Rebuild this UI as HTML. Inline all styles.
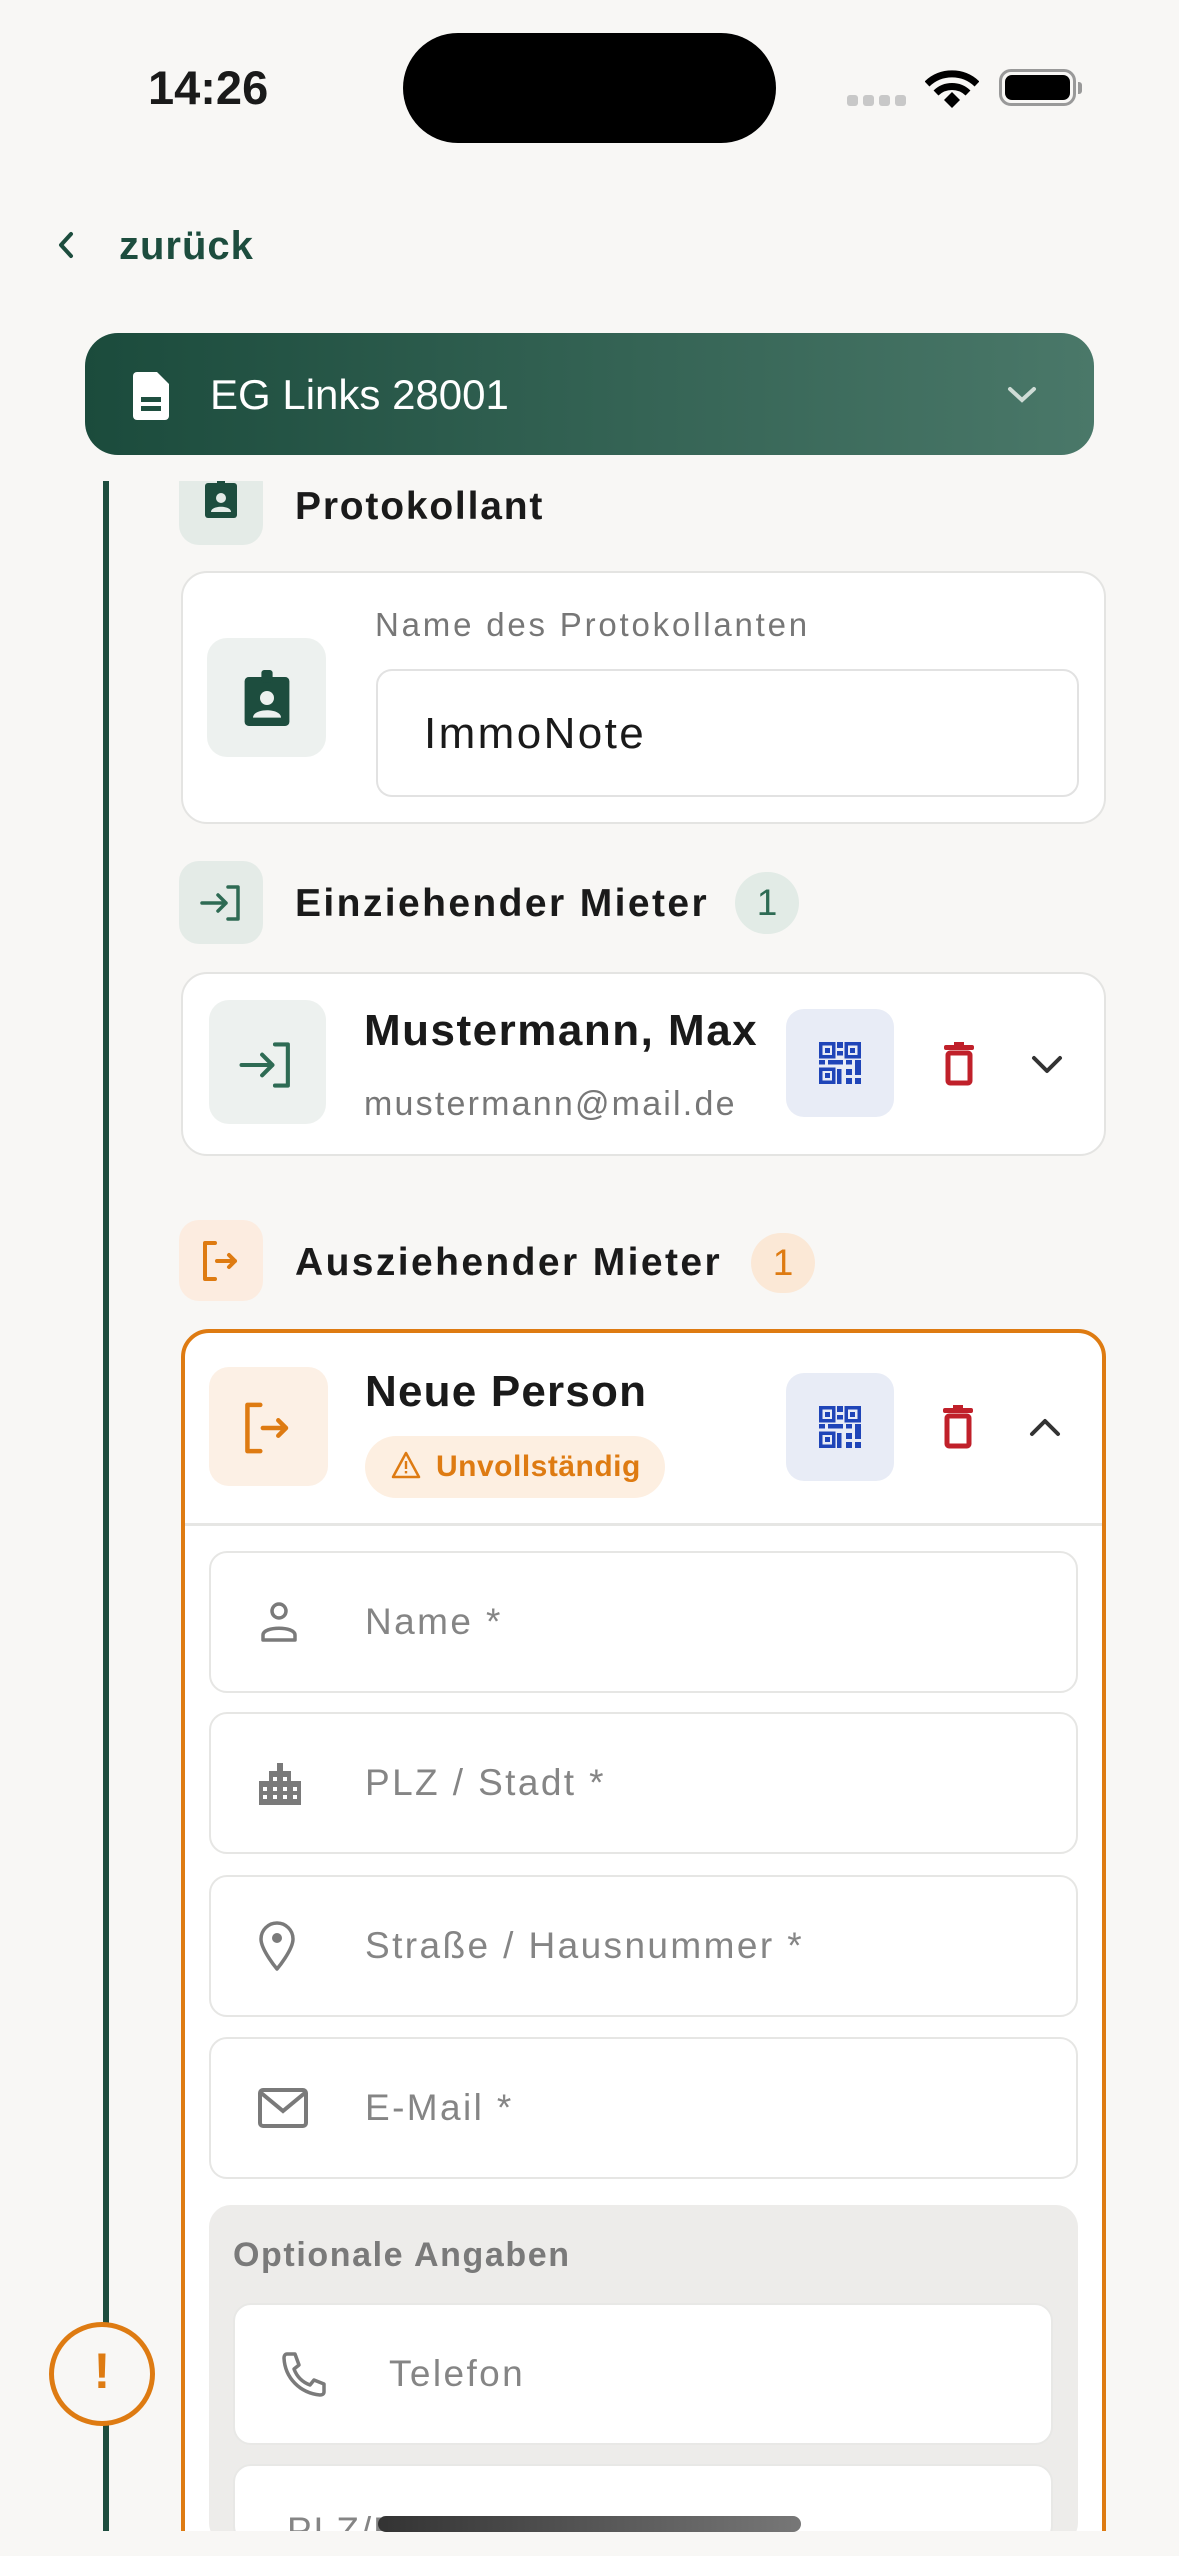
<!DOCTYPE html>
<html><head><meta charset="utf-8"><style>
*{margin:0;padding:0;box-sizing:border-box}
html,body{width:1179px;height:2556px;overflow:hidden}
body{background:#f8f7f5;font-family:"Liberation Sans",sans-serif;position:relative;color:#1a1a1a}
.a{position:absolute}
.t{position:absolute;white-space:nowrap;line-height:1}
.box{position:absolute;border-radius:20px}
.card{position:absolute;background:#fff;border:2px solid #e4e4e2;border-radius:26px}
.field{position:absolute;background:#fff;border:2px solid #e6e6e4;border-radius:18px;left:209px;width:869px;height:142px}
.ph{position:absolute;left:154px;top:50%;transform:translateY(-50%);font-size:37px;color:#858585;white-space:nowrap;letter-spacing:2.4px}
.fi{position:absolute;left:46px;top:50%;transform:translateY(-50%)}
</style></head><body>
<!-- status bar -->
<div class="t" style="left:148px;top:64px;font-size:47px;font-weight:700">14:26</div>
<div class="a" style="left:403px;top:33px;width:373px;height:110px;background:#000;border-radius:55px"></div>
<div class="a" style="left:847px;top:95px;width:11px;height:11px;border-radius:3px;background:#c8c8c8"></div>
<div class="a" style="left:863px;top:95px;width:11px;height:11px;border-radius:3px;background:#c8c8c8"></div>
<div class="a" style="left:879px;top:95px;width:11px;height:11px;border-radius:3px;background:#c8c8c8"></div>
<div class="a" style="left:895px;top:95px;width:11px;height:11px;border-radius:3px;background:#c8c8c8"></div>
<svg class="a" style="left:925px;top:68px" width="54" height="40" viewBox="0 0 54 40"><path d="M2 16 A36 36 0 0 1 52 16" fill="none" stroke="#000" stroke-width="7"/><path d="M11 25 A23 23 0 0 1 43 25" fill="none" stroke="#000" stroke-width="7"/><path d="M19 32 L27 24 L35 32 L27 40Z" fill="#000"/></svg>
<div class="a" style="left:999px;top:69px;width:77px;height:37px;border:3px solid #999;border-radius:12px"></div>
<div class="a" style="left:1005px;top:75px;width:65px;height:25px;background:#000;border-radius:7px"></div>
<div class="a" style="left:1078px;top:82px;width:4px;height:12px;background:#999;border-radius:0 3px 3px 0"></div>

<!-- back -->
<svg class="a" style="left:56px;top:230px" width="20" height="30" viewBox="0 0 20 30"><path d="M15 4 L5 15 L15 26" fill="none" stroke="#1d4d3e" stroke-width="4" stroke-linecap="round" stroke-linejoin="round"/></svg>
<div class="t" style="left:119px;top:226px;font-size:40px;color:#1d4d3e;font-weight:600;letter-spacing:1px">zurück</div>

<!-- header -->
<div class="a" style="left:85px;top:333px;width:1009px;height:122px;border-radius:33px;background:linear-gradient(90deg,#1b4b3c,#4a7869)"></div>
<svg class="a" style="left:133px;top:372px" width="40" height="48" viewBox="0 0 40 48"><path d="M4 0 H24 L36 12 V44 A4 4 0 0 1 32 48 H4 A4 4 0 0 1 0 44 V4 A4 4 0 0 1 4 0Z" fill="#fff"/><rect x="8" y="25" width="20" height="5" fill="#1f4f40"/><rect x="8" y="34" width="20" height="5" fill="#1f4f40"/></svg>
<div class="t" style="left:210px;top:374px;font-size:42px;color:#fff">EG Links 28001</div>
<svg class="a" style="left:1007px;top:385px" width="30" height="20" viewBox="0 0 30 20"><path d="M3 4 L15 15 L27 4" fill="none" stroke="#cfdcd6" stroke-width="4" stroke-linecap="round"/></svg>

<!-- timeline -->
<div class="a" style="left:103px;top:481px;width:6px;height:2050px;background:#1d4d3e"></div>

<div class="a" style="left:0;top:481px;width:1179px;height:2050px;overflow:hidden">
 <div class="a" style="left:0;top:-481px;width:1179px;height:2531px">
  <!-- Protokollant -->
  <div class="box" style="left:179px;top:463px;width:84px;height:82px;background:#e4ebe7"></div>
  <svg class="a" style="left:205px;top:478px" width="32" height="40" viewBox="0 0 32 40"><rect x="0" y="5" width="32" height="35" rx="3" fill="#1d4d3e"/><rect x="12" y="0" width="8" height="9" rx="2" fill="#1d4d3e"/><circle cx="16" cy="20" r="5" fill="#e4ebe7"/><path d="M6 34 C6 27 26 27 26 34Z" fill="#e4ebe7"/></svg>
  <div class="t" style="left:295px;top:487px;font-size:39px;font-weight:700;letter-spacing:1.8px">Protokollant</div>

  <div class="card" style="left:181px;top:571px;width:925px;height:253px"></div>
  <div class="box" style="left:207px;top:638px;width:119px;height:119px;background:#edf1ef"></div>
  <svg class="a" style="left:244px;top:670px" width="46" height="56" viewBox="0 0 32 40"><rect x="0" y="5" width="32" height="35" rx="3" fill="#1d4d3e"/><rect x="12" y="0" width="8" height="9" rx="2" fill="#1d4d3e"/><circle cx="16" cy="20" r="5" fill="#edf1ef"/><path d="M6 34 C6 27 26 27 26 34Z" fill="#edf1ef"/></svg>
  <div class="t" style="left:375px;top:608px;font-size:33px;color:#777;letter-spacing:2.8px">Name des Protokollanten</div>
  <div class="a" style="left:376px;top:669px;width:703px;height:128px;border:2px solid #e2e2e2;border-radius:16px;background:#fff"></div>
  <div class="t" style="left:424px;top:712px;font-size:44px;color:#1a1a1a;letter-spacing:2.4px">ImmoNote</div>

  <!-- Einziehender -->
  <div class="box" style="left:179px;top:861px;width:84px;height:83px;background:#e4ebe7"></div>
  <svg class="a" style="left:200px;top:884px" width="42" height="38" viewBox="0 0 42 38"><path d="M2 19 H26 M18 11 L26 19 L18 27" fill="none" stroke="#2e6b54" stroke-width="3.5" stroke-linecap="round" stroke-linejoin="round"/><path d="M28 3 H38 V35 H28" fill="none" stroke="#2e6b54" stroke-width="3.5" stroke-linecap="round" stroke-linejoin="round"/></svg>
  <div class="t" style="left:295px;top:884px;font-size:39px;font-weight:700;letter-spacing:2.4px">Einziehender Mieter</div>
  <div class="a" style="left:735px;top:872px;width:64px;height:62px;border-radius:31px;background:#e2ebe6;color:#2e6b54;font-size:37px;text-align:center;line-height:62px">1</div>

  <div class="card" style="left:181px;top:972px;width:925px;height:184px"></div>
  <div class="box" style="left:209px;top:1000px;width:117px;height:124px;background:#edf1ef"></div>
  <svg class="a" style="left:239px;top:1040px" width="54" height="50" viewBox="0 0 42 38"><path d="M2 19 H26 M18 11 L26 19 L18 27" fill="none" stroke="#2e6b54" stroke-width="3.2" stroke-linecap="round" stroke-linejoin="round"/><path d="M28 3 H38 V35 H28" fill="none" stroke="#2e6b54" stroke-width="3.2" stroke-linecap="round" stroke-linejoin="round"/></svg>
  <div class="t" style="left:364px;top:1009px;font-size:44px;font-weight:700;letter-spacing:1.5px">Mustermann, Max</div>
  <div class="t" style="left:364px;top:1087px;font-size:34px;color:#777;letter-spacing:2.2px">mustermann@mail.de</div>
  <div class="box" style="left:786px;top:1009px;width:108px;height:108px;background:#e8ecf6;border-radius:18px"></div>
  <svg class="a" style="left:819px;top:1042px" width="42" height="42" viewBox="0 0 14 14" shape-rendering="crispEdges"><g fill="none" stroke="#1f45b8" stroke-width="1.2"><rect x=".6" y=".6" width="4.3" height="4.3"/><rect x="9.1" y=".6" width="4.3" height="4.3"/><rect x=".6" y="9.1" width="4.3" height="4.3"/></g><g fill="#1f45b8"><rect x="2" y="2" width="1.6" height="1.6"/><rect x="10.4" y="2" width="1.6" height="1.6"/><rect x="2" y="10.4" width="1.6" height="1.6"/><rect x="6" y="0" width="2" height="2"/><rect x="6" y="3" width="2" height="1.5"/><rect x="0" y="6" width="2" height="1.5"/><rect x="3" y="6" width="5" height="1.5"/><rect x="9" y="6" width="2" height="1.5"/><rect x="12" y="6" width="2" height="5"/><rect x="6" y="9" width="1.5" height="5"/><rect x="9" y="9" width="2" height="2"/><rect x="9" y="12" width="2" height="2"/><rect x="12" y="12" width="2" height="2"/></g></svg>
  <svg class="a" style="left:942px;top:1042px" width="34" height="44" viewBox="0 0 34 44"><rect x="6" y="11" width="22" height="30" rx="2" fill="none" stroke="#c0202a" stroke-width="5"/><rect x="2" y="3" width="30" height="5" rx="2" fill="#c0202a"/><rect x="12" y="0" width="10" height="5" fill="#c0202a"/></svg>
  <svg class="a" style="left:1030px;top:1054px" width="34" height="22" viewBox="0 0 34 22"><path d="M4 4 L17 17 L30 4" fill="none" stroke="#333" stroke-width="4" stroke-linecap="round" stroke-linejoin="round"/></svg>

  <!-- Ausziehender -->
  <div class="box" style="left:179px;top:1220px;width:84px;height:81px;background:#fcece0"></div>
  <svg class="a" style="left:201px;top:1240px" width="40" height="42" viewBox="0 0 40 42"><path d="M14 3 H4 V39 H14" fill="none" stroke="#de7b12" stroke-width="4" stroke-linecap="round" stroke-linejoin="round"/><path d="M16 21 H34 M28 15 L34 21 L28 27" fill="none" stroke="#de7b12" stroke-width="4" stroke-linecap="round" stroke-linejoin="round"/></svg>
  <div class="t" style="left:295px;top:1243px;font-size:39px;font-weight:700;letter-spacing:2.4px">Ausziehender Mieter</div>
  <div class="a" style="left:751px;top:1233px;width:64px;height:60px;border-radius:31px;background:#fbe8d6;color:#de7b12;font-size:37px;text-align:center;line-height:60px">1</div>

  <div class="a" style="left:181px;top:1329px;width:925px;height:1230px;border:4px solid #de7b12;border-radius:28px;background:#fff"></div>
  <div class="box" style="left:209px;top:1367px;width:119px;height:119px;background:#fcf0e5"></div>
  <svg class="a" style="left:242px;top:1401px" width="52" height="54" viewBox="0 0 40 42"><path d="M14 3 H4 V39 H14" fill="none" stroke="#de7b12" stroke-width="3.5" stroke-linecap="round" stroke-linejoin="round"/><path d="M16 21 H34 M28 15 L34 21 L28 27" fill="none" stroke="#de7b12" stroke-width="3.5" stroke-linecap="round" stroke-linejoin="round"/></svg>
  <div class="t" style="left:365px;top:1370px;font-size:44px;font-weight:700;letter-spacing:1.2px">Neue Person</div>
  <div class="a" style="left:365px;top:1436px;width:300px;height:62px;border-radius:31px;background:#fdefe1"></div>
  <svg class="a" style="left:391px;top:1451px" width="30" height="28" viewBox="0 0 30 28"><path d="M15 2 L28 26 H2Z" fill="none" stroke="#de7b12" stroke-width="2.5" stroke-linejoin="round"/><rect x="13.8" y="10" width="2.4" height="8" fill="#de7b12"/><rect x="13.8" y="20" width="2.4" height="2.4" fill="#de7b12"/></svg>
  <div class="t" style="left:436px;top:1452px;font-size:30px;color:#de7b12;font-weight:700;letter-spacing:.5px">Unvollständig</div>
  <div class="box" style="left:786px;top:1373px;width:108px;height:108px;background:#e8ecf6;border-radius:18px"></div>
  <svg class="a" style="left:819px;top:1406px" width="42" height="42" viewBox="0 0 14 14" shape-rendering="crispEdges"><g fill="none" stroke="#1f45b8" stroke-width="1.2"><rect x=".6" y=".6" width="4.3" height="4.3"/><rect x="9.1" y=".6" width="4.3" height="4.3"/><rect x=".6" y="9.1" width="4.3" height="4.3"/></g><g fill="#1f45b8"><rect x="2" y="2" width="1.6" height="1.6"/><rect x="10.4" y="2" width="1.6" height="1.6"/><rect x="2" y="10.4" width="1.6" height="1.6"/><rect x="6" y="0" width="2" height="2"/><rect x="6" y="3" width="2" height="1.5"/><rect x="0" y="6" width="2" height="1.5"/><rect x="3" y="6" width="5" height="1.5"/><rect x="9" y="6" width="2" height="1.5"/><rect x="12" y="6" width="2" height="5"/><rect x="6" y="9" width="1.5" height="5"/><rect x="9" y="9" width="2" height="2"/><rect x="9" y="12" width="2" height="2"/><rect x="12" y="12" width="2" height="2"/></g></svg>
  <svg class="a" style="left:941px;top:1405px" width="34" height="44" viewBox="0 0 34 44"><rect x="6" y="11" width="22" height="30" rx="2" fill="none" stroke="#c0202a" stroke-width="5"/><rect x="2" y="3" width="30" height="5" rx="2" fill="#c0202a"/><rect x="12" y="0" width="10" height="5" fill="#c0202a"/></svg>
  <svg class="a" style="left:1028px;top:1416px" width="34" height="22" viewBox="0 0 34 22"><path d="M4 18 L17 5 L30 18" fill="none" stroke="#333" stroke-width="4" stroke-linecap="round" stroke-linejoin="round"/></svg>
  <div class="a" style="left:185px;top:1523px;width:917px;height:3px;background:#e6e6e4"></div>

  <div class="field" style="top:1551px"><svg class="fi" width="44" height="44" viewBox="0 0 44 44"><circle cx="22" cy="11" r="7" fill="none" stroke="#7a7a7a" stroke-width="3.5"/><path d="M6 40 V35 C6 26 38 26 38 35 V40 Z" fill="none" stroke="#7a7a7a" stroke-width="3.5" stroke-linejoin="round"/></svg><div class="ph">Name *</div></div>
  <div class="field" style="top:1712px"><svg class="fi" width="46" height="48" viewBox="0 0 46 48"><path d="M2 46 V22 H12 V12 H20 V4 H26 V12 H34 V22 H44 V46 Z" fill="#7a7a7a"/><g fill="#fff"><rect x="6" y="28" width="4" height="4"/><rect x="6" y="36" width="4" height="4"/><rect x="16" y="18" width="4" height="4"/><rect x="16" y="28" width="4" height="4"/><rect x="16" y="36" width="4" height="4"/><rect x="26" y="18" width="4" height="4"/><rect x="26" y="28" width="4" height="4"/><rect x="26" y="36" width="4" height="4"/><rect x="36" y="28" width="4" height="4"/><rect x="36" y="36" width="4" height="4"/></g></svg><div class="ph">PLZ / Stadt *</div></div>
  <div class="field" style="top:1875px"><svg class="fi" width="40" height="52" viewBox="0 0 40 52"><path d="M20 49 C20 49 4 30 4 19 A16 16 0 0 1 36 19 C36 30 20 49 20 49Z" fill="none" stroke="#7a7a7a" stroke-width="3.5" stroke-linejoin="round"/><circle cx="20" cy="18" r="5" fill="#7a7a7a"/></svg><div class="ph">Straße / Hausnummer *</div></div>
  <div class="field" style="top:2037px"><svg class="fi" width="52" height="42" viewBox="0 0 52 42"><rect x="3" y="3" width="46" height="36" rx="3" fill="none" stroke="#7a7a7a" stroke-width="4"/><path d="M3 5 L26 24 L49 5" fill="none" stroke="#7a7a7a" stroke-width="4"/></svg><div class="ph">E-Mail *</div></div>

  <div class="a" style="left:209px;top:2205px;width:869px;height:340px;background:#edecea;border-radius:22px"></div>
  <div class="t" style="left:233px;top:2238px;font-size:34px;font-weight:700;color:#7a7a7a;letter-spacing:1.6px">Optionale Angaben</div>
  <div class="field" style="left:233px;width:820px;top:2303px;border-color:#e8e8e6"><svg class="fi" style="left:46px" width="46" height="46" viewBox="0 0 46 46"><path d="M6 3 H14 L18 14 L13 18 C16 26 21 31 29 34 L33 29 L43 33 V41 C43 43 41 44 39 44 C19 42 4 27 3 7 C3 5 4 3 6 3Z" fill="none" stroke="#7a7a7a" stroke-width="3.5" stroke-linejoin="round"/></svg><div class="ph">Telefon</div></div>
  <div class="field" style="left:233px;width:820px;top:2464px;height:80px;border-color:#e8e8e6"><div class="t" style="left:52px;top:46px;font-size:37px;color:#858585;letter-spacing:2px">PLZ/BIC</div></div>
 </div>
</div>

<!-- warning circle -->
<div class="a" style="left:49px;top:2322px;width:106px;height:104px;border:5px solid #de7b12;border-radius:50%;background:#f8f7f5"></div>
<div class="t" style="left:49px;top:2346px;width:106px;text-align:center;font-size:50px;font-weight:700;color:#de7b12">!</div>

<!-- home indicator -->
<div class="a" style="left:378px;top:2516px;width:423px;height:16px;border-radius:8px;background:linear-gradient(90deg,#333,#777)"></div>
</body></html>
